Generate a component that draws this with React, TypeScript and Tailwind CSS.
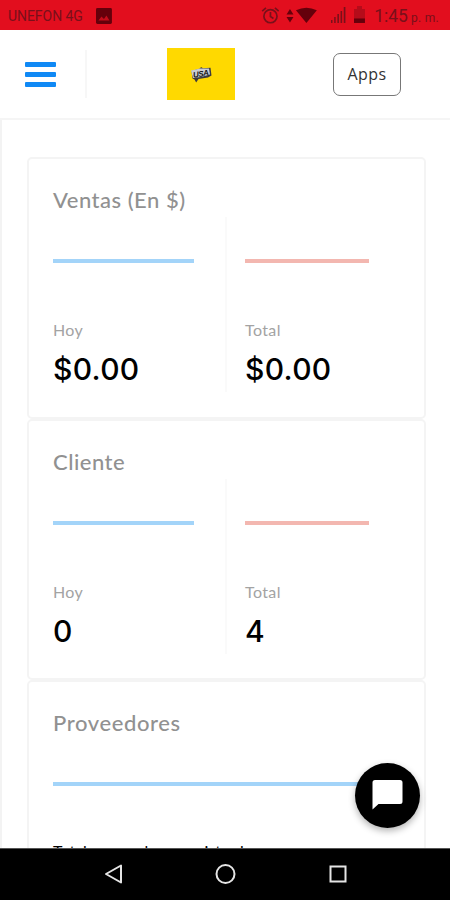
import { Fragment } from "react";

type Stat = { label: string; value: string };

function StatusBar() {
  return (
    <div className="flex h-[30px] shrink-0 items-center bg-[#e20e1e] pl-2 pr-[11px] font-[Roboto,sans-serif] text-[#79101a]">
      <span className="w-[82px] whitespace-nowrap pt-[2px] text-[14px] tracking-[-0.05px]">UNEFON 4G</span>
      <svg className="ml-[6px] mt-[1px] h-4 w-4" viewBox="0 0 16 16">
        <rect width="16" height="16" rx="1.5" fill="#65000b" />
        <path d="M2.5 12.5 5.5 8.5 8 11 10.5 7.5 13.5 12.5Z" fill="#c20c1a" />
      </svg>
      <svg className="ml-[149px] mt-[1px] h-[19px] w-[19px]" viewBox="0 0 19 19" fill="none" stroke="#79101a" strokeWidth="1.7">
        <circle cx="9.5" cy="10.2" r="6.6" />
        <path d="M1.2 5 5 1.8M14 1.8l3.8 3.2M9.5 6v4.5l3 2" />
      </svg>
      <svg className="ml-[7px] mt-[2px] h-[18px] w-[33px]" viewBox="0 0 33 18" fill="#65000b">
        <path d="M0.5 7.5 4 2 7.5 7.500ZM0.5 10h7L4 15.500ZM10 3.2Q20.500-2 31 3.200L20.500 16Z" />
      </svg>
      <svg className="ml-[12px] h-[18px] w-[15px]" viewBox="0 0 15 18" fill="#79101a">
        <path d="M0 14h1.500v3H0ZM3.200 11h1.500v6H3.200ZM6.400 8H8v9H6.400ZM9.600 5h1.600v12H9.600ZM12.800 1h1.700v16h-1.700Z" />
      </svg>
      <svg className="ml-[8px] h-[18px] w-[11px]" viewBox="0 0 11 18">
        <path d="M0 3h3V0h5v3h3v10H0Z" fill="#b50c1a" />
        <path d="M0 12.500h11V17H0Z" fill="#65000b" />
      </svg>
      <span className="ml-[9px] whitespace-nowrap pt-[2px] text-[17.5px]">1:45</span>
      <span className="ml-[3px] whitespace-nowrap pt-[5px] text-[12px] tracking-[0.3px]">p. m.</span>
    </div>
  );
}

function Header() {
  return (
    <header className="flex h-[90px] shrink-0 items-start border-b-2 border-[#f5f5f5] bg-white">
      <button aria-label="Menu" className="ml-[25px] mt-[32px] flex w-[31px] flex-col gap-[5px]">
        <span className="h-[5px] rounded-[1px] bg-[#1089f5]" />
        <span className="h-[5px] rounded-[1px] bg-[#1089f5]" />
        <span className="h-[5px] rounded-[1px] bg-[#1089f5]" />
      </button>
      <div className="ml-[29px] mt-5 h-12 w-[2px] bg-[#f7f7f7]" />
      <div className="ml-[80px] mt-[18px] flex h-[52px] w-[68px] items-center justify-center bg-[#ffd900]">
        <svg className="h-[17px] w-[23px]" viewBox="0 0 23 17">
          <path d="M1.500 5 10 2.500 11 1 13 2.200 20.500 1.800 21.500 9.500 18 11.500 8.500 13 6.200 16.500 4.500 13.500 2.500 12.500Z" fill="#3d3a3c" />
          <path d="M1 4.500 10 2.500 19 2.500 20 8.500 11 11 3 12Z" fill="#c9cbd3" />
          <text x="3" y="10.500" transform="rotate(-9 11 8)" fontFamily="Liberation Sans, sans-serif" fontSize="8" fontWeight="700" fontStyle="italic" textLength="16" fill="#171717">USA</text>
        </svg>
      </div>
      <button className="ml-[98px] mt-[23px] flex h-[43px] w-[68px] items-center justify-center rounded-[7px] border border-[#777] pb-[2px] font-['Open_Sans',sans-serif] text-[16px] tracking-[0.4px] text-[#333]">
        Apps
      </button>
    </header>
  );
}

function StatColumn({ label, value, line }: Stat & { line: string }) {
  return (
    <div className="flex flex-col">
      <div className={line} />
      <div className="mt-[57px] h-5 whitespace-nowrap text-[16px] leading-5 tracking-[0.4px] text-[#a3a3a3]">{label}</div>
      <div className="mt-[11px] h-9 whitespace-nowrap font-[Inter,sans-serif] text-[30px] font-[450] leading-9 tracking-[0.3px] text-black">{value}</div>
    </div>
  );
}

function StatCard({ title, today, total }: { title: string; today: string; total: string }) {
  return (
    <section className="flex h-[261.500px] shrink-0 flex-col rounded-[5px] border-2 border-[#f4f4f4] bg-white pl-6">
      <h2 className="mt-[26px] h-[32px] whitespace-nowrap text-[22px] font-medium leading-[30px] tracking-[0.5px] text-[#919191]">{title}</h2>
      <div className="flex h-[175px] items-start">
        <div className="w-[172px] pt-[42px]">
          <StatColumn label="Hoy" value={today} line="h-1 w-[141px] bg-[#a3d4f9]" />
        </div>
        <div className="h-[175px] w-[2px] bg-[#fafafa]" />
        <div className="ml-[18px] pt-[42px]">
          <StatColumn label="Total" value={total} line="h-1 w-[124px] bg-[#f3b7b0]" />
        </div>
      </div>
    </section>
  );
}

function SystemNavigation() {
  return (
    <nav className="flex h-[52px] shrink-0 items-center justify-center border-t border-[#555] bg-black">
      <svg className="h-6 w-[244px]" viewBox="0 0 244 24" fill="none" stroke="#e5e5e5" strokeWidth="2">
        <path d="M18 2.500v17L3 11Z" strokeLinejoin="round" />
        <circle cx="122.500" cy="11" r="9" />
        <rect x="227.500" y="3.500" width="15" height="15" />
      </svg>
    </nav>
  );
}

const cards = [
  { title: "Ventas (En $)", today: "$0.00", total: "$0.00" },
  { title: "Cliente", today: "0", total: "4" },
];

export default function App() {
  return (
    <div className="relative flex h-[900px] w-[450px] flex-col overflow-hidden bg-white font-[Lato,sans-serif]">
      <StatusBar />
      <Header />
      <main className="flex min-h-0 flex-1 flex-col overflow-hidden border-l-2 border-[#f3f3f3] pl-[25px] pr-6 pt-[37px]">
        {cards.map((card) => (
          <Fragment key={card.title}>
            <StatCard {...card} />
          </Fragment>
        ))}
        <section className="flex h-[262px] shrink-0 flex-col rounded-[5px] border-2 border-[#f4f4f4] bg-white px-6">
          <h2 className="mt-[26px] h-[32px] text-[22px] font-medium leading-[30px] tracking-[0.6px] text-[#919191]">Proveedores</h2>
          <div className="mt-[42px] h-1 shrink-0 bg-[#a3d4f9]" />
          <p className="mt-[55px] whitespace-nowrap text-[16px] leading-5 text-black">Total proveedores registrados</p>
        </section>
      </main>
      <SystemNavigation />
      <button aria-label="Chat" className="absolute left-[355px] top-[763px] flex h-[65px] w-[65px] items-center justify-center rounded-full bg-black shadow-[0_3px_7px_rgba(0,0,0,0.3)]">
        <svg className="h-[31px] w-[31px]" viewBox="0 0 31 31" fill="white">
          <path d="M3 0h25a2.500 2.500 0 0 1 2.500 2.500v19A2.500 2.500 0 0 1 28 24H6.500L.5 29.500v-27A2.500 2.500 0 0 1 3 0Z" />
        </svg>
      </button>
    </div>
  );
}
